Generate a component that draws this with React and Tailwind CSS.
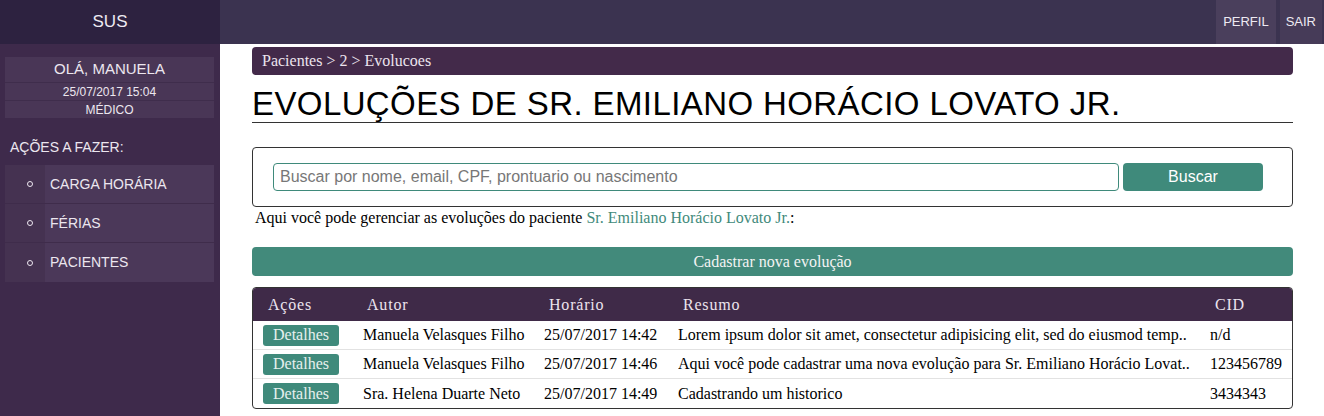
import React from "react";

const serif = { fontFamily: '"Liberation Serif", "Times New Roman", serif' };

function Sidebar() {
  const items = ["CARGA HORÁRIA", "FÉRIAS", "PACIENTES"];
  return (
    <aside className="w-[220px] shrink-0 flex flex-col bg-[#3e2a4b]">
      <div className="h-[44px] bg-[#2d2240] flex items-center justify-center text-[17px] text-[#eeeaf2]">SUS</div>
      <div className="mx-[5px] mt-[13px] w-[209px] bg-[#493656] text-[#ece6ef] flex flex-col items-center">
        <div className="h-[26px] w-full flex items-center justify-center text-[15px] border-b border-[#3f2d4c]">OLÁ, MANUELA</div>
        <div className="h-[18px] w-full flex items-center justify-center text-[12px] border-b border-[#3f2d4c]">25/07/2017 15:04</div>
        <div className="h-[17px] w-full flex items-center justify-center text-[12px]">MÉDICO</div>
      </div>
      <div className="mt-[19px] pl-[10px] text-[14px] text-[#ece6ef]">AÇÕES A FAZER:</div>
      <ul className="mx-[5px] mt-[7px] w-[209px] flex flex-col">
        {items.map((it, i) => (
          <li key={it} className={`flex h-[39px] bg-[#453251] ${i < 2 ? "border-b border-[#3f2c4b]" : ""}`}>
            <div className="w-[40px] flex items-center justify-center">
              <span className="w-[6px] h-[6px] rounded-full border border-[#ece6ef] ml-[10px]" />
            </div>
            <div className="flex-1 flex items-center bg-[#4b3859] text-[14px] text-[#ece6ef] pl-[5px]">{it}</div>
          </li>
        ))}
      </ul>
    </aside>
  );
}

const rows = [
  ["Manuela Velasques Filho", "25/07/2017 14:42", "Lorem ipsum dolor sit amet, consectetur adipisicing elit, sed do eiusmod temp..", "n/d"],
  ["Manuela Velasques Filho", "25/07/2017 14:46", "Aqui você pode cadastrar uma nova evolução para Sr. Emiliano Horácio Lovat..", "123456789"],
  ["Sra. Helena Duarte Neto", "25/07/2017 14:49", "Cadastrando um historico", "3434343"],
];

export default function App() {
  return (
    <div className="w-[1324px] h-[416px] overflow-hidden flex bg-white" style={{ fontFamily: '"Liberation Sans", Arial, sans-serif' }}>
      <Sidebar />
      <div className="flex-1 flex flex-col">
        <header className="h-[44px] bg-[#3b3350] flex justify-end items-stretch pr-[2px] gap-[4px]">
          <div className="px-[7px] bg-[#4a3f5c] flex items-center text-[13px] text-[#eeeaf2]">PERFIL</div>
          <div className="px-[6px] bg-[#463b58] flex items-center text-[13px] text-[#eeeaf2]">SAIR</div>
        </header>
        <main className="ml-[32px] w-[1041px] flex flex-col">
          <div className="mt-[3px] h-[28px] rounded-[4px] bg-[#432a4a] text-[#ece4ee] text-[16px] flex items-center px-[10px]" style={serif}>
            Pacientes &gt; 2 &gt; Evolucoes
          </div>
          <h1 className="mt-[11px] text-[33px] leading-[36px] text-black tracking-[0.4px] border-b border-[#333]">
            EVOLUÇÕES DE SR. EMILIANO HORÁCIO LOVATO JR.
          </h1>
          <div className="mt-[24px] h-[60px] border border-[#333] rounded-[4px] flex items-center pl-[20px] gap-[4px]">
            <div className="w-[846px] h-[28px] border border-[#3f8a7b] rounded-[4px] flex items-center px-[6px] text-[16px] text-[#777]">
              Buscar por nome, email, CPF, prontuario ou nascimento
            </div>
            <div className="w-[140px] h-[28px] bg-[#3f8a7b] rounded-[4px] flex items-center justify-center text-[16px] text-white">Buscar</div>
          </div>
          <p className="mt-[1px] ml-[3px] text-[16px] leading-[20px] text-black" style={serif}>
            Aqui você pode gerenciar as evoluções do paciente <span className="text-[#3f8a7b]">Sr. Emiliano Horácio Lovato Jr.</span>:
          </p>
          <div className="mt-[19px] h-[29px] rounded-[4px] bg-[#428a7b] flex items-center justify-center text-[16px] text-[#f3f3f3]" style={serif}>
            Cadastrar nova evolução
          </div>
          <div className="mt-[11px] border border-[#333] rounded-[4px] overflow-hidden" style={serif}>
            <div className="h-[33px] bg-[#3f2a48] flex items-center text-[16px] text-[#ece4ee] tracking-[0.8px]">
              <div className="w-[114px] pl-[15px]">Ações</div>
              <div className="w-[182px]">Autor</div>
              <div className="w-[134px]">Horário</div>
              <div className="w-[532px]">Resumo</div>
              <div className="flex-1">CID</div>
            </div>
            {rows.map((r, i) => (
              <div key={i} className={`h-[29px] flex items-center text-[16px] text-black ${i < 2 ? "border-b border-[#e2e2e2]" : ""}`}>
                <div className="w-[110px] pl-[10px]">
                  <span className="inline-flex items-center justify-center w-[76px] h-[21px] rounded-[3px] bg-[#3f8a7b] text-[#e6f0ee]">Detalhes</span>
                </div>
                <div className="w-[181px]">{r[0]}</div>
                <div className="w-[134px]">{r[1]}</div>
                <div className="w-[532px] whitespace-nowrap overflow-hidden">{r[2]}</div>
                <div className="flex-1">{r[3]}</div>
              </div>
            ))}
          </div>
        </main>
      </div>
    </div>
  );
}
